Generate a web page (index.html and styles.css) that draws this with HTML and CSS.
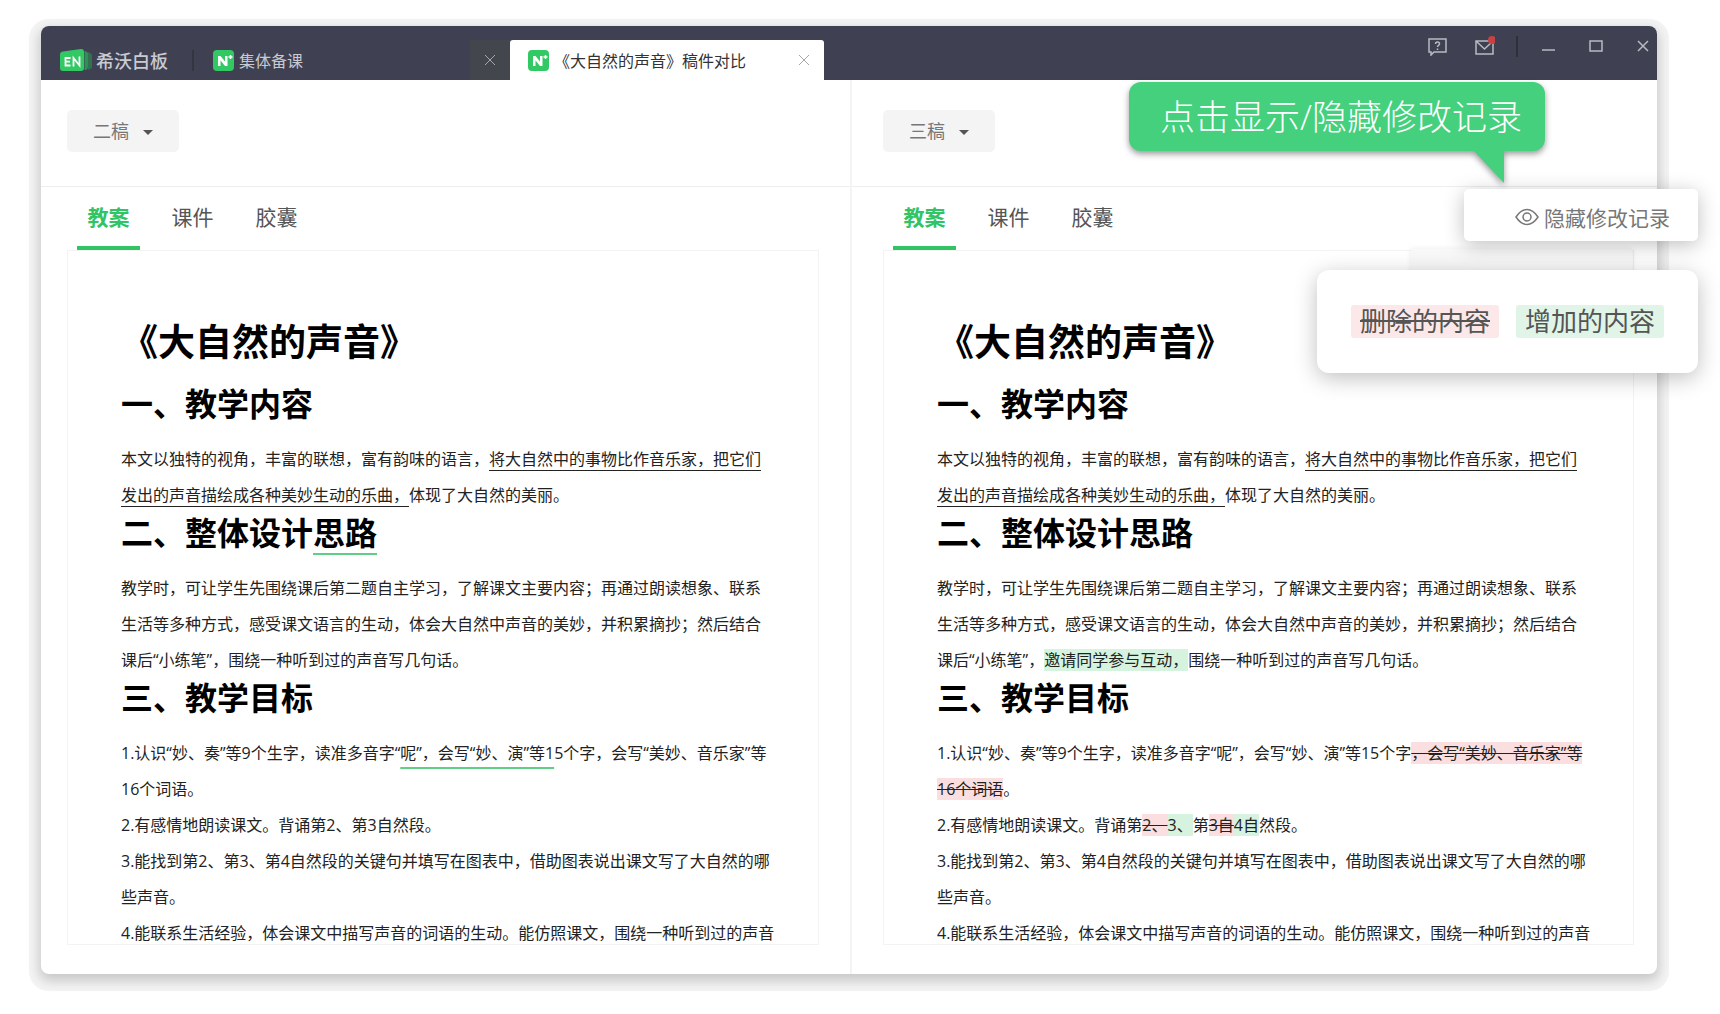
FILE: index.html
```html
<!DOCTYPE html>
<html lang="zh-CN">

<head>
    <meta charset="UTF-8">
    <title>《大自然的声音》稿件对比</title>
    <link rel="stylesheet" href="styles.css">
</head>

<body>
    <div class="window">
        <header class="titlebar">
            <div class="brand">
                <svg width="32" height="22" viewBox="0 0 32 22">
                    <path d="M28 3l2 1q2 .5 2 2v12q0 2-2 2l-2 1z" fill="#32704f" />
                    <path d="M24.500 2l1.500 .5q2 .5 2 2v13q0 3-2 3.500h-1.500z" fill="#2f9158" />
                    <path d="M3 2.600L21 0q3 0 3 3v16q0 3-3 3H3q-3 0-3-3V6q0-3 3-3.400z" fill="#32c864" />
                    <path d="M10.500 9H5.500v7.500h5M5.500 12.700h4.500M13.500 17.500V9l6 7.500V7.500" fill="none" stroke="#fff" stroke-width="1.800" />
                </svg>
                <span>希沃白板</span>
            </div>
            <nav class="file-tabs">
                <div class="file-tab">
                    <svg width="21" height="21" viewBox="0 0 21 21">
                        <rect width="21" height="21" rx="4" fill="#32c864" />
                        <path d="M5 16V6h2.500l4.500 5.500V6h2.500v10H12l-4.500-5.500V16z" fill="#fff" />
                        <path d="M17.500 5v4M15.500 7h4" stroke="#fff" stroke-width="1.500" />
                    </svg>
                    <a href="#">集体备课</a>
                    <button class="tab-close" aria-label="关闭">
                        <svg width="12" height="12" viewBox="0 0 12 12"><path d="M1 1l10 10M11 1L1 11" /></svg>
                    </button>
                </div>
                <div class="file-tab current">
                    <svg width="21" height="21" viewBox="0 0 21 21">
                        <rect width="21" height="21" rx="4" fill="#32c864" />
                        <path d="M5 16V6h2.500l4.500 5.500V6h2.500v10H12l-4.500-5.500V16z" fill="#fff" />
                        <path d="M17.500 5v4M15.500 7h4" stroke="#fff" stroke-width="1.500" />
                    </svg>
                    <a href="#">《大自然的声音》稿件对比</a>
                    <button class="tab-close" aria-label="关闭">
                        <svg width="12" height="12" viewBox="0 0 12 12"><path d="M1 1l10 10M11 1L1 11" /></svg>
                    </button>
                </div>
            </nav>
            <div class="controls">
                <button aria-label="帮助">
                    <svg width="20" height="20" viewBox="0 0 20 20">
                        <path d="M1 3h17v13H6l-3 3v-3H1z" />
                        <path d="M7.500 8Q7.500 6 9.500 6t2 1.800q0 1-1 1.600t-1 1.600M9.500 12.500v1.500" />
                    </svg>
                </button>
                <button aria-label="消息">
                    <svg width="20" height="20" viewBox="0 0 20 20">
                        <path d="M1 5h17v13H1zM1.500 5.500l8 7.500 8-7.500" />
                        <circle cx="17" cy="4" r="4" class="dot" />
                    </svg>
                </button>
                <span class="bar"></span>
                <button aria-label="最小化">
                    <svg width="20" height="20" viewBox="0 0 20 20"><path d="M3 14h13" /></svg>
                </button>
                <button aria-label="最大化">
                    <svg width="20" height="20" viewBox="0 0 20 20"><path d="M4 5h12v10H4z" /></svg>
                </button>
                <button aria-label="关闭窗口">
                    <svg width="20" height="20" viewBox="0 0 20 20"><path d="M5 5l10 10M15 5L5 15" /></svg>
                </button>
            </div>
        </header>

        <main class="compare">
            <section class="pane">
                <div class="toolbar">
                    <label class="version">
                        <select aria-label="左侧稿件">
                            <option>二稿</option>
                        </select>
                    </label>
                </div>
                <div class="content">
                    <div class="tabs">
                        <button class="active">教案</button>
                        <button>课件</button>
                        <button>胶囊</button>
                    </div>
                    <article class="doc">
                        <h1>《大自然的声音》</h1>
                        <h2>一、教学内容</h2>
                        <p>本文以独特的视角，丰富的联想，富有韵味的语言，<u>将大自然中的事物比作音乐家，把它们<br>发出的声音描绘成各种美妙生动的乐曲，</u>体现了大自然的美丽。</p>
                        <h2>二、整体设计<u class="changed">思路</u></h2>
                        <p>教学时，可让学生先围绕课后第二题自主学习，了解课文主要内容；再通过朗读想象、联系<br>生活等多种方式，感受课文语言的生动，体会大自然中声音的美妙，并积累摘抄；然后结合<br>课后“小练笔”，围绕一种听到过的声音写几句话。</p>
                        <h2>三、教学目标</h2>
                        <p>1.认识“妙、奏”等9个生字，读准多音字“<u class="changed">呢”，会写“妙、演”等1</u>5个字，会写“美妙、音乐家”等<br>16个词语。</p>
                        <p>2.有感情地朗读课文。背诵第2、第3自然段。</p>
                        <p>3.能找到第2、第3、第4自然段的关键句并填写在图表中，借助图表说出课文写了大自然的哪<br>些声音。</p>
                        <p>4.能联系生活经验，体会课文中描写声音的词语的生动。能仿照课文，围绕一种听到过的声音</p>
                    </article>
                </div>
            </section>

            <section class="pane">
                <div class="toolbar">
                    <label class="version">
                        <select aria-label="右侧稿件">
                            <option>三稿</option>
                        </select>
                    </label>
                </div>
                <div class="content">
                    <div class="tabs">
                        <button class="active">教案</button>
                        <button>课件</button>
                        <button>胶囊</button>
                    </div>
                    <article class="doc">
                        <h1>《大自然的声音》</h1>
                        <h2>一、教学内容</h2>
                        <p>本文以独特的视角，丰富的联想，富有韵味的语言，<u>将大自然中的事物比作音乐家，把它们<br>发出的声音描绘成各种美妙生动的乐曲，</u>体现了大自然的美丽。</p>
                        <h2>二、整体设计思路</h2>
                        <p>教学时，可让学生先围绕课后第二题自主学习，了解课文主要内容；再通过朗读想象、联系<br>生活等多种方式，感受课文语言的生动，体会大自然中声音的美妙，并积累摘抄；然后结合<br>课后“小练笔”，<ins>邀请同学参与互动，</ins>围绕一种听到过的声音写几句话。</p>
                        <h2>三、教学目标</h2>
                        <p>1.认识“妙、奏”等9个生字，读准多音字“呢”，会写“妙、演”等15个字<del>，会写“美妙、音乐家”等<br>16个词语</del>。</p>
                        <p>2.有感情地朗读课文。背诵第<del>2、</del><ins>3、</ins>第<del>3自</del><ins>4自</ins>然段。</p>
                        <p>3.能找到第2、第3、第4自然段的关键句并填写在图表中，借助图表说出课文写了大自然的哪<br>些声音。</p>
                        <p>4.能联系生活经验，体会课文中描写声音的词语的生动。能仿照课文，围绕一种听到过的声音</p>
                    </article>
                </div>
            </section>
        </main>

        <div class="popover-back"></div>
        <button class="toggle">
            <svg width="24" height="20" viewBox="0 0 24 20">
                <path d="M1 10Q6 2.500 12 2.500t11 7.500q-5 7.500-11 7.500T1 10z" />
                <circle cx="12" cy="10" r="4" />
            </svg>
            隐藏修改记录
        </button>
        <div class="legend">
            <del>删除的内容</del>
            <ins>增加的内容</ins>
        </div>
        <div class="callout">
            点击显示/隐藏修改记录
            <svg class="tail" width="32" height="34" viewBox="0 0 32 34"><path d="M0 0h31v33z" /></svg>
        </div>
    </div>
</body>

</html>
```
FILE: styles.css
```css
* {
    box-sizing: border-box;
}

body {
    margin: 0;
    height: 100vh;
    padding: 26px 63px 40px 41px;
    background: #fff;
    color: #222;
    font-family: "Open Sans", "Noto Sans CJK SC", sans-serif;
    font-size: 16px;
}

button, select {
    font-family: inherit;
    border: none;
    background: none;
    padding: 0;
    cursor: pointer;
}

a {
    color: inherit;
    text-decoration: none;
}

svg {
    display: block;
    flex: none;
}

.window {
    position: relative;
    height: 100%;
    display: flex;
    flex-direction: column;
    background: #fff;
    border-radius: 8px;
    box-shadow: 0 5px 12px 2px rgba(0, 0, 0, 0.18), 0 5px 0 12px #f4f4f4;
}

/* title bar */
.titlebar {
    display: flex;
    align-items: flex-end;
    height: 54px;
    background: #3f4152;
    border-radius: 8px 8px 0 0;
    color: #c9cad0;
}

.brand {
    display: flex;
    align-items: center;
    gap: 4px;
    height: 40px;
    width: 153px;
    padding-left: 19px;
    font-size: 18px;
    font-weight: 500;
}

.brand::after {
    content: "";
    margin-left: auto;
    width: 2px;
    height: 21px;
    background: #33353f;
}

.file-tabs {
    display: flex;
}

.file-tab {
    display: flex;
    align-items: center;
    gap: 5px;
    width: 316px;
    height: 40px;
    padding-left: 19px;
}

.file-tab.current {
    width: 314px;
    padding-left: 18px;
    background: #fff;
    color: #333;
    border-radius: 3px 3px 0 0;
}

.tab-close {
    display: flex;
    align-items: center;
    justify-content: center;
    width: 40px;
    height: 40px;
    margin-left: auto;
    background: #44464d;
}

.current .tab-close {
    background: none;
}

.tab-close path {
    fill: none;
    stroke: #a5a5aa;
    stroke-width: 1;
}

.controls {
    display: flex;
    align-items: center;
    align-self: flex-start;
    gap: 27px;
    height: 40px;
    margin-left: auto;
    padding-right: 4px;
}

.controls path {
    fill: none;
    stroke: #b9bac1;
    stroke-width: 1.5;
}

.controls .dot {
    fill: #c84242;
}

.bar {
    width: 2px;
    height: 21px;
    margin: 0 -6px;
    background: #2d2f39;
}

/* two drafts side by side */
.compare {
    flex: 1;
    min-height: 0;
    display: grid;
    grid-template-columns: calc(50% + 3px) 1fr;
}

.pane {
    display: flex;
    flex-direction: column;
    min-width: 0;
    min-height: 0;
}

.pane:first-child {
    border-right: 2px solid #f4f4f4;
}

.toolbar {
    display: flex;
    align-items: center;
    height: 107px;
    padding: 20px 26px 24px;
    border-bottom: 1px solid #eee;
}

.content {
    flex: 1;
    min-height: 0;
    display: flex;
    flex-direction: column;
    padding: 0 31px 29px 26px;
}

.pane + .pane .toolbar {
    padding-left: 31px;
}

.pane + .pane .content {
    padding-left: 31px;
    padding-right: 23px;
}

.version {
    position: relative;
}

.version select {
    appearance: none;
    display: block;
    width: 112px;
    height: 42px;
    padding-left: 26px;
    border-radius: 5px;
    background: #f4f4f4;
    color: #777;
    font-size: 18px;
}

.version::after {
    content: "";
    position: absolute;
    right: 26px;
    top: 20px;
    border: 5px solid transparent;
    border-top-color: #555;
    border-bottom: none;
    pointer-events: none;
}

.tabs {
    display: flex;
    gap: 21px;
    padding-left: 10px;
    margin-bottom: -1px;
}

.tabs button {
    width: 63px;
    height: 64px;
    padding-bottom: 2px;
    border-bottom: 5px solid transparent;
    font-size: 21px;
    color: #555;
}

.tabs .active {
    border-bottom-color: #32c364;
    color: #32c364;
    font-weight: bold;
}

.doc {
    flex: 1;
    min-height: 0;
    overflow: hidden;
    padding: 67px 53px 0;
    border: 1px solid #f3f3f3;
    white-space: nowrap;
}

.doc h1 {
    margin: 0 0 18px;
    font-size: 37px;
    line-height: 48px;
    color: #000;
}

.doc h2 {
    margin: 0 0 17px;
    font-size: 32px;
    line-height: 40px;
    color: #000;
}

.doc p {
    margin: 0;
    line-height: 36px;
}

u {
    text-decoration-thickness: 1px;
    text-underline-offset: 5px;
}

.changed {
    text-decoration: underline 2px #5fcf88;
    text-underline-offset: 8px;
    text-decoration-skip-ink: none;
}

del {
    background: #fbdfe0;
}

ins {
    background: #d5f3de;
    text-decoration: none;
}

/* floating parts */
.toggle {
    position: absolute;
    top: 163px;
    right: -41px;
    display: flex;
    align-items: center;
    justify-content: flex-end;
    gap: 5px;
    width: 234px;
    height: 52px;
    padding-top: 3px;
    padding-right: 28px;
    border-radius: 5px;
    background: #fff;
    box-shadow: 0 4px 20px rgba(0, 0, 0, 0.25);
    color: #777;
    font-size: 21px;
}

.toggle path, .toggle circle {
    fill: none;
    stroke: #777;
    stroke-width: 1.5;
}

.popover-back {
    position: absolute;
    top: 223px;
    right: 25px;
    width: 221px;
    height: 40px;
    background: #f8f8f8;
    box-shadow: 0 0 6px rgba(0, 0, 0, 0.08);
}

.legend {
    position: absolute;
    top: 244px;
    right: -41px;
    display: flex;
    align-items: center;
    justify-content: center;
    gap: 17px;
    width: 381px;
    height: 103px;
    border-radius: 12px;
    background: #fff;
    box-shadow: 0 5px 22px rgba(0, 0, 0, 0.25);
    color: #555;
    font-size: 26px;
    line-height: 33px;
}

.legend del, .legend ins {
    padding: 0 9px;
    border-radius: 3px;
}

.legend del {
    background: #fce8e8;
}

.legend ins {
    background: #e0f5e7;
}

.callout {
    position: absolute;
    top: 56px;
    right: 112px;
    width: 416px;
    height: 69px;
    padding-left: 8px;
    border-radius: 12px;
    background: #45d07d;
    color: #fff;
    font-size: 35px;
    font-weight: 300;
    line-height: 69px;
    text-align: center;
    filter: drop-shadow(0 3px 3px rgba(0, 0, 0, 0.4));
}

.tail {
    position: absolute;
    top: 68px;
    right: 40px;
    fill: #45d07d;
}
```
